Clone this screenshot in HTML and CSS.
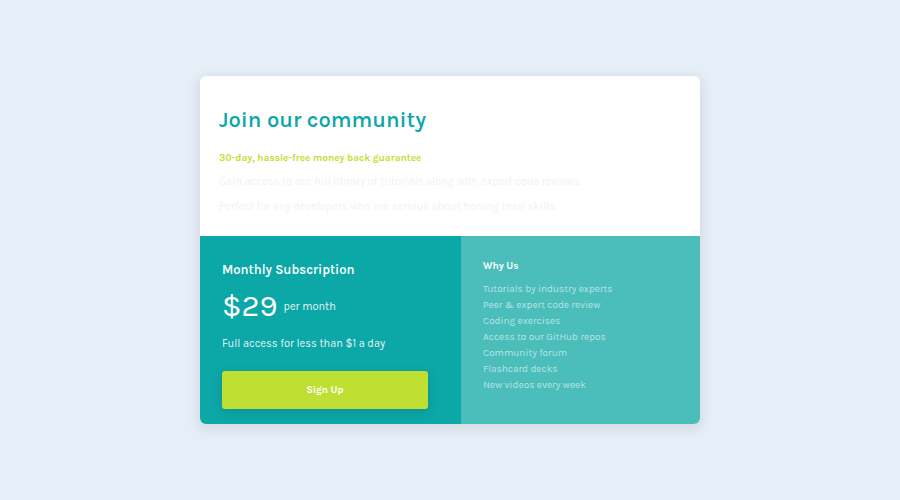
FILE: index.html
```html
<!DOCTYPE html>
<html lang="en">
<head>
    <meta charset="UTF-8">
    <meta name="viewport" content="width=device-width, initial-scale=1.0">
    <title>Single Price Grid Component</title>
    <link rel="stylesheet" href="styles.css">
</head>
<body>
    <main class="card">
        <!-- Intro -->
        <section class="intro">
            <h1>Join our community</h1>
            <h2>30-day, hassle-free money back guarantee</h2>
            <p>Gain access to our full library of tutorials along with expert code reviews.</p>
            <p>Perfect for any developers who are serious about honing their skills.</p>
        </section>

        <div class="columns">
            <!-- Price -->
            <section class="subscription">
                <h3>Monthly Subscription</h3>
                <div class="price">
                    <span class="amount">$29</span>
                    <span class="period">per month</span>
                </div>
                <p>Full access for less than $1 a day</p>
                <button type="button">Sign Up</button>
            </section>

            <!-- Reasons -->
            <section class="why">
                <h3>Why Us</h3>
                <ul>
                    <li>Tutorials by industry experts</li>
                    <li>Peer &amp; expert code review</li>
                    <li>Coding exercises</li>
                    <li>Access to our GitHub repos</li>
                    <li>Community forum</li>
                    <li>Flashcard decks</li>
                    <li>New videos every week</li>
                </ul>
            </section>
        </div>
    </main>
</body>
</html>
```

FILE: styles.css
```css
* {
    box-sizing: border-box;
    margin: 0;
    padding: 0;
}

body {
    font-family: Karla, Inter, sans-serif;
    background-color: #e6eef8;
    min-height: 100vh;
    display: flex;
    justify-content: center;
    align-items: center;
}

.card {
    width: 90%;
    max-width: 500px;
    border-radius: 6px;
    overflow: hidden;
    background-color: white;
    box-shadow: 0 3px 12px 3px rgba(0, 0, 0, 0.08);
}

/* Intro */
.intro {
    padding: 28px 19px 17px;
    color: #f0f2f4;
    font-size: 11px;
}

.intro h1 {
    color: #0ca7a7;
    font-size: 22px;
    font-weight: 600;
    line-height: 32px;
    margin-bottom: 12px;
}

.intro h2 {
    color: #bfdf32;
    font-size: 10px;
    font-weight: 700;
    line-height: 20px;
    margin-bottom: 1px;
}

.intro p {
    line-height: 25px;
}

.columns {
    display: grid;
    grid-template-columns: 261fr 239fr;
    color: white;
}

/* Subscription */
.subscription {
    background-color: #0ca7a7;
    padding: 22px 33px 15px 22px;
    font-size: 11px;
}

.subscription h3 {
    font-size: 13px;
    font-weight: 600;
    line-height: 24px;
}

.price {
    display: flex;
    align-items: center;
    gap: 6px;
    line-height: 49px;
}

.amount {
    font-size: 31px;
}

.period,
.subscription p {
    color: #e3f5f5;
}

.subscription p {
    line-height: 26px;
    margin-bottom: 14px;
}

.subscription button {
    width: 100%;
    height: 38px;
    border: none;
    border-radius: 3px;
    background-color: #bfdf32;
    color: white;
    font-family: inherit;
    font-size: 10px;
    font-weight: 700;
    cursor: pointer;
    box-shadow: 0 3px 12px rgba(0, 0, 0, 0.12);
}

/* Why us */
.why {
    background-color: #4bbdbb;
    padding: 22px;
}

.why h3 {
    font-size: 10px;
    font-weight: 700;
    line-height: 16px;
    margin-bottom: 7px;
}

.why ul {
    list-style: none;
    color: #b7e5e4;
    font-size: 10px;
    line-height: 16px;
}
```
